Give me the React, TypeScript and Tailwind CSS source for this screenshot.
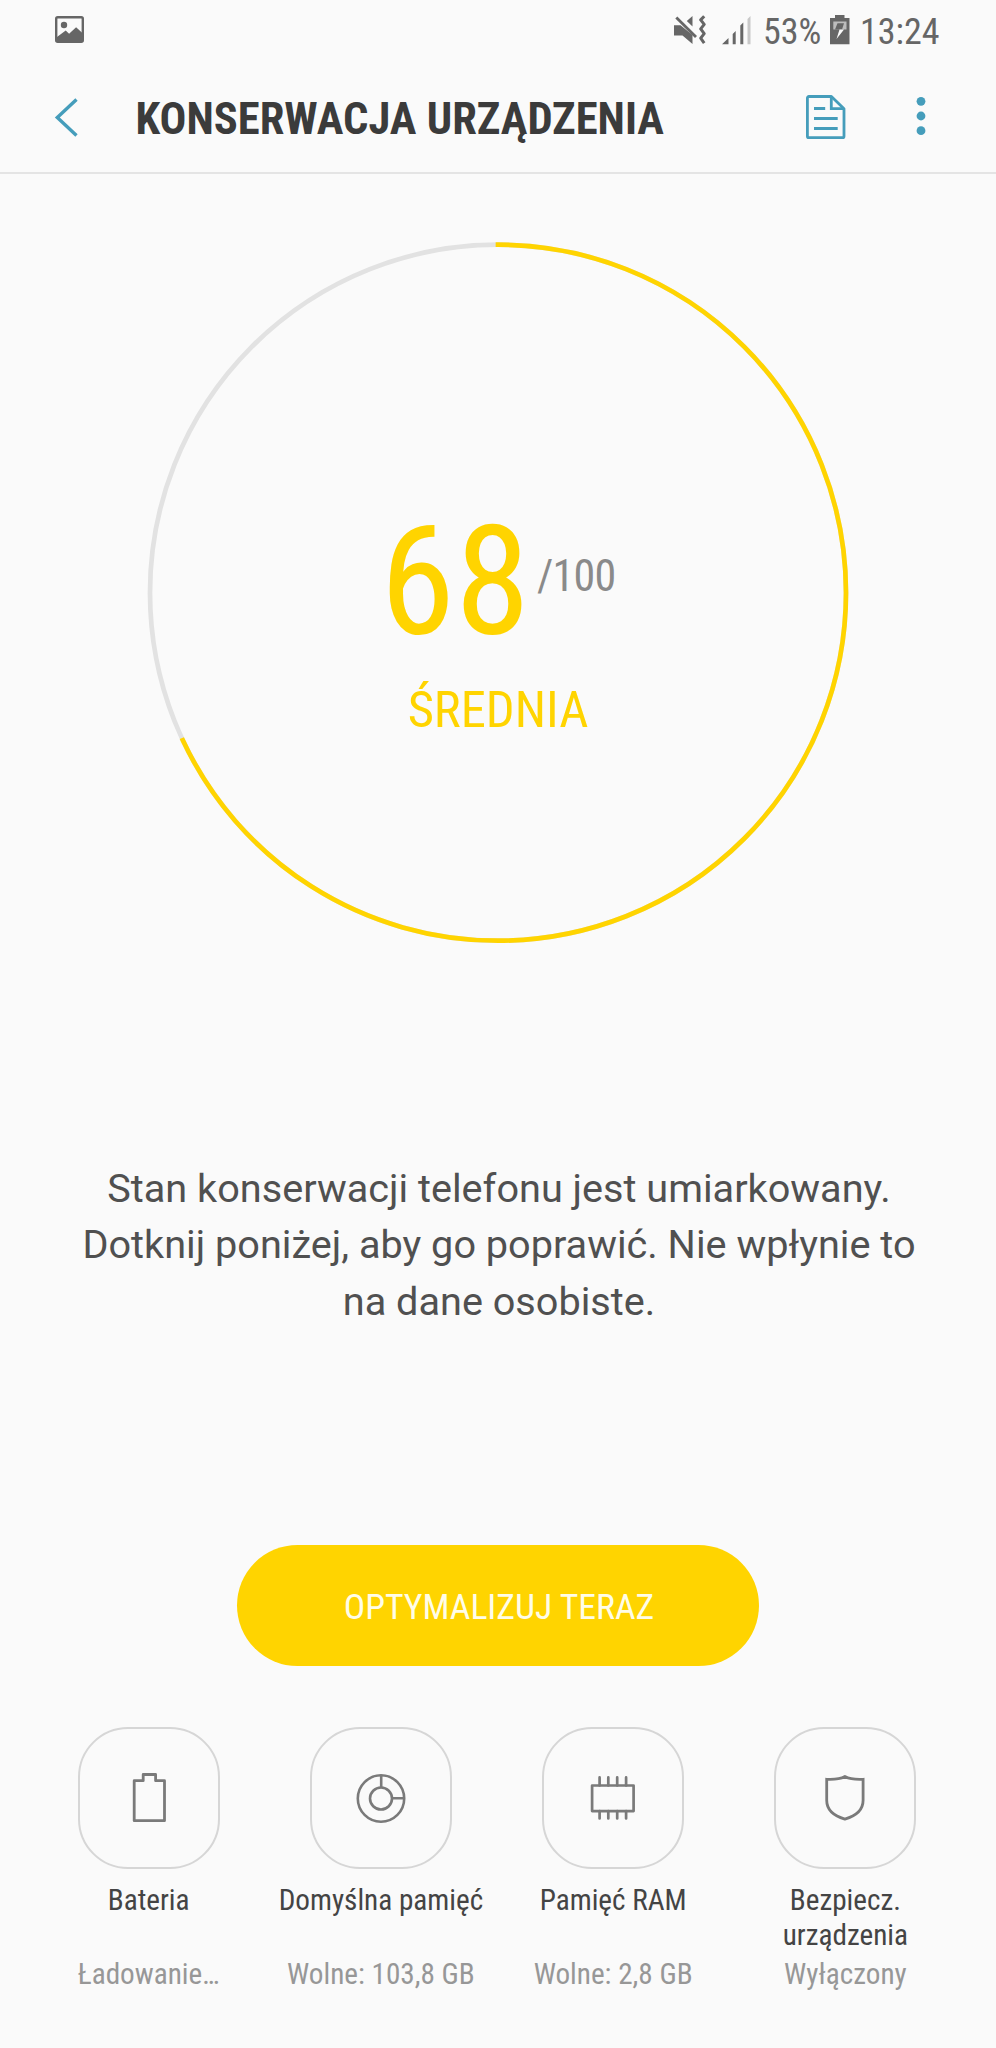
import React from 'react';

const SCORE = 68;
const RADIUS = 348;
const CIRCUMFERENCE = 2 * Math.PI * RADIUS;

const tiles = [
  { id: 'battery', label: 'Bateria', status: 'Ładowanie…', icon: <BatteryIcon /> },
  { id: 'storage', label: 'Domyślna pamięć', status: 'Wolne: 103,8 GB', icon: <StorageIcon /> },
  { id: 'ram', label: 'Pamięć RAM', status: 'Wolne: 2,8 GB', icon: <RamIcon /> },
  { id: 'security', label: 'Bezpiecz. urządzenia', status: 'Wyłączony', icon: <ShieldIcon /> },
];

function BatteryIcon() {
  return (
    <svg width="60" height="60" viewBox="0 0 60 60" fill="none" stroke="#7a7a7a" strokeWidth="2.8" strokeLinejoin="round">
      <path d="M15.200 12.700h9V6.500h12.400v6.200h8.900v40H15.200z" />
    </svg>
  );
}

function StorageIcon() {
  return (
    <svg width="60" height="60" viewBox="0 0 60 60" fill="none" stroke="#7a7a7a" strokeWidth="2.6">
      <circle cx="30" cy="30.5" r="23.2" />
      <circle cx="30" cy="30.5" r="11" />
      <path d="M30.2 7.5v12M41 30.3h12.3" />
    </svg>
  );
}

function RamIcon() {
  return (
    <svg width="60" height="60" viewBox="0 0 60 60" fill="none" stroke="#7a7a7a" strokeWidth="2.7" strokeLinejoin="round">
      <rect x="9.1" y="17.5" width="41.5" height="25.6" />
      <path strokeLinecap="round" d="M16.6 9.4v8M25.3 9.4v8M34.2 9.4v8M43.1 9.4v8M16.6 43v7.5M25.3 43v7.5M34.2 43v7.5M43.1 43v7.5" />
    </svg>
  );
}

function ShieldIcon() {
  return (
    <svg width="60" height="60" viewBox="0 0 60 60" fill="none" stroke="#7a7a7a" strokeWidth="2.8">
      <path d="M29.9 8.6c-4.500 2.400-10 3.100-18.200 2.700v21c0 9 7 15.600 18.200 18.800 11.200-3.200 18.200-9.800 18.200-18.800v-21c-8.200.4-13.700-.3-18.200-2.700z" />
    </svg>
  );
}

function StatusBar() {
  return (
    <div className="h-16 flex items-start pl-[55px] text-[#666666] text-[36px] leading-[42px]">
      <svg className="mt-4" width="29" height="27" viewBox="0 0 29 27">
        <rect x="1.2" y="1.2" width="26.6" height="24.6" rx="1.5" fill="none" stroke="#666666" strokeWidth="2.4" />
        <circle cx="9" cy="9" r="3.2" fill="#666666" />
        <path d="M2 21l8.700-6.500 3.400 3.200 7-6.400 6 5.500V26H2z" fill="#666666" />
      </svg>
      {/* Sound off + vibrate */}
      <svg className="mt-[15px] ml-[590px]" width="32" height="30" viewBox="0 0 32 30" fill="#666666">
        <path d="M0 10.300h6.500L18.500 20v9L8.500 20.500H0z" />
        <path d="M12.800 6L18.500 1v10.500z" />
        <path d="M2.300 2.500L22 22" stroke="#666666" strokeWidth="2.800" />
        <path d="M30.200 1.200l-3.500 3.700 3.500 4.500-3.500 4.500 3.500 4.700-3.500 4.500 3.500 5" fill="none" stroke="#666666" strokeWidth="3" strokeLinejoin="round" />
      </svg>
      <svg className="mt-4 ml-4" width="29" height="29" viewBox="0 0 29 29" fill="#666666">
        <path d="M0 28.300L6.500 22v6.300zM10.700 28.300V18l3-3v13.300zM18.300 28.300V9.500l3-3v21.800z" />
        <path d="M25.500 28.300V3l3-3v28.300z" fill="#c8c8c8" />
      </svg>
      <span className="w-[67px] ml-3 mt-[11px] font-['Roboto_Condensed',sans-serif]">53%</span>
      <svg className="mt-[15px]" width="20" height="30" viewBox="0 0 20 30">
        <path d="M5 0h9.500v3h5v26.300H0V3h5z" fill="#666666" />
        <path d="M3.300 6.500h13.200v8H3.300z" fill="#bdbdbd" />
        <path d="M7.500 8.300H14l-2 6.200H5z" fill="#666666" />
        <path d="M5 14.500h4.500L6.500 24l7.500-9.500z" fill="#fafafa" />
      </svg>
      <span className="ml-[10px] mt-[11px] font-['Roboto_Condensed',sans-serif]">13:24</span>
    </div>
  );
}

function Header() {
  return (
    <header className="h-[110px] flex items-center pl-[54px] border-b-2 border-[#e4e4e4] text-[#459dbb]">
      <svg width="24" height="40" viewBox="0 0 24 40" fill="none" stroke="currentColor" strokeWidth="3.400">
        <path d="M22.500 1.500L3.300 19.500l19.200 18" />
      </svg>
      <h1 className="w-[671px] pl-[57.500px] pt-[2px] text-[44.6px] leading-[54px] font-bold text-[#3b3b3b] font-['Roboto_Condensed',sans-serif]">
        KONSERWACJA URZĄDZENIA
      </h1>
      <svg className="ml-[57px] -mt-[2px]" width="40" height="45" viewBox="0 0 40 45" fill="none" stroke="currentColor" strokeWidth="2.800">
        <path strokeLinejoin="round" d="M2.900 1.500h22.500L38 13.700v27.500a1.500 1.500 0 0 1-1.500 1.500H2.900a1.500 1.500 0 0 1-1.500-1.500V3a1.500 1.500 0 0 1 1.500-1.500z" />
        <path d="M25.300 1.500v12.200H38M8 13.500h11.200M8 23.500h23.700M8 33.500h23.700" />
      </svg>
      <svg className="ml-[70px] -mt-[4px]" width="10" height="40" viewBox="0 0 10 40" fill="currentColor">
        <circle cx="5" cy="5.300" r="4.400" />
        <circle cx="5" cy="20" r="4.400" />
        <circle cx="5" cy="34.700" r="4.400" />
      </svg>
    </header>
  );
}

function ScoreGauge() {
  return (
    <div className="grid w-[702px] h-[702px] mt-[68px] mx-auto font-['Roboto_Condensed',sans-serif]">
      <svg className="col-start-1 row-start-1" width="702" height="702" viewBox="0 0 702 702" fill="none" strokeWidth="4.700">
        <circle cx="351" cy="350.700" r={RADIUS} stroke="#e2e2e2" />
        <circle
          cx="351"
          cy="350.700"
          r={RADIUS}
          stroke="#ffd400"
          strokeLinecap="square"
          strokeDasharray={`${(CIRCUMFERENCE * SCORE) / 100} ${CIRCUMFERENCE}`}
          transform="rotate(-90 351 350.700)"
        />
      </svg>
      <div className="col-start-1 row-start-1 pt-[264px] text-[#ffd400]">
        <div className="flex items-start pl-[233px]">
          <span className="text-[152px] leading-[152px]">{SCORE}</span>
          <span className="ml-[7px] mt-[48px] text-[44px] leading-[45px] tracking-[-0.800px] text-[#8a8a8a]">/100</span>
        </div>
        <div className="mt-[22px] text-center text-[50.600px] leading-[60px]">ŚREDNIA</div>
      </div>
    </div>
  );
}

export default function App() {
  return (
    <div className="w-[996px] h-[2048px] bg-[#fafafa] overflow-hidden font-[Roboto,sans-serif]">
      <StatusBar />
      <Header />
      <ScoreGauge />

      <p className="mt-[217px] pl-[65px] pr-[63px] text-[39.650px] leading-[56.400px] text-center text-[#505050]">
        Stan konserwacji telefonu jest umiarkowany. Dotknij poniżej, aby go poprawić. Nie wpłynie to na dane osobiste.
      </p>

      <button className="block w-[522px] h-[121px] mt-[215px] mx-auto pt-[4px] pl-[2px] rounded-full bg-[#ffd400] text-[#fffde8] text-[35.700px] font-['Roboto_Condensed',sans-serif]">
        OPTYMALIZUJ TERAZ
      </button>

      {/* Shortcuts */}
      <div className="grid grid-cols-4 w-[929px] ml-[32.500px] mt-[61px] text-[29.200px] leading-[35px] text-center font-['Roboto_Condensed',sans-serif]">
        {tiles.map(tile => (
          <div key={tile.id} className="flex flex-col items-center">
            <div className="w-[142px] h-[142px] rounded-[50px] border-2 border-[#d6d6d6] flex items-center justify-center">
              {tile.icon}
            </div>
            <div className="h-[70px] mt-[14px] text-[#444444]">{tile.label}</div>
            <div className="mt-1 text-[#979797]">{tile.status}</div>
          </div>
        ))}
      </div>
    </div>
  );
}
